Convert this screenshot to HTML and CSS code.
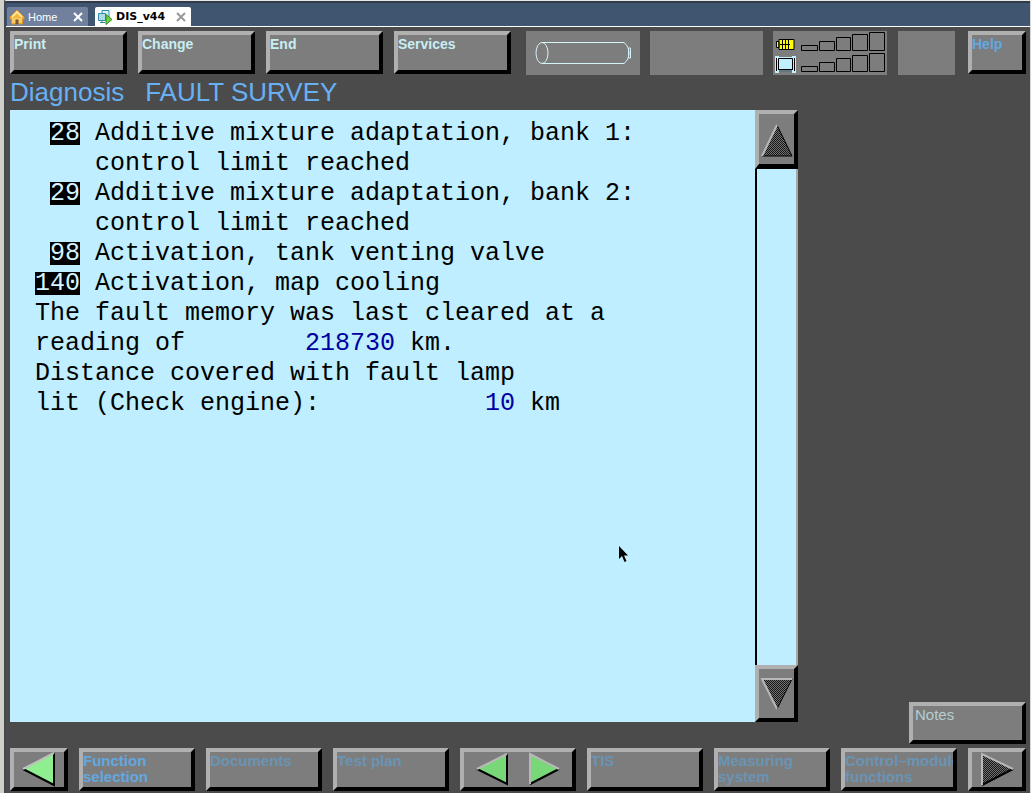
FILE: index.html
```html
<!DOCTYPE html>
<html lang="en">
<head>
<meta charset="utf-8">
<title>DIS_v44</title>
<link rel="stylesheet" href="styles.css">
</head>
<body>
<div class="window">
  <nav class="tabs" aria-label="Machines">
    <div class="tab">
      <svg class="tab-icon" width="16" height="16" viewBox="0 0 16 16"><path d="M8 1 1 8v2h1.500v5h4v-5h3v5h4v-5H15V8z" fill="#f5b63c" stroke="#d99524"/><path d="M3 8 8 3l5 5" fill="none" stroke="#fff0b0" stroke-width="1.500"/><path d="M3 9h10v5H3z" fill="#f8cc62"/><path d="M6.500 15v-4.500h3V15z" fill="#775735"/></svg>
      <a class="tab-link" href="#home">Home</a>
      <button class="tab-close" aria-label="Close Home"><svg width="10" height="10" viewBox="0 0 10 10"><path d="m1 1 8 8M9 1 1 9" stroke="currentColor" stroke-width="2"/></svg></button>
    </div>
    <div class="tab tab-active">
      <svg class="tab-icon" width="16" height="16" viewBox="0 0 16 16"><path d="M5 1.500h7v7H5z" fill="#d9f3f8" stroke="#318da8"/><path d="M1.500 4.500h7v7h-7z" fill="#a9dcea" stroke="#318da8"/><path d="M3 13.500h5M5 11.500v2" stroke="#318da8"/><path d="M9 5.500v10l6-5z" fill="#6fd23c" stroke="#328b22"/></svg>
      <a class="tab-link" href="#dis">DIS_v44</a>
      <button class="tab-close" aria-label="Close DIS_v44"><svg width="10" height="10" viewBox="0 0 10 10"><path d="m1 1 8 8M9 1 1 9" stroke="currentColor" stroke-width="2"/></svg></button>
    </div>
  </nav>

  <div class="app">
    <header class="toolbar">
      <div class="menu">
        <button class="key">Print</button>
        <button class="key">Change</button>
        <button class="key">End</button>
        <button class="key">Services</button>
      </div>
      <div class="status">
        <div class="panel"><svg class="cable" width="96" height="24" viewBox="0 0 96 24" fill="none" stroke="#d4f4fa"><ellipse cx="7" cy="12" rx="6" ry="10.500"/><path d="M7 1.500h82q5 4 5 10.500t-5 10.500H7"/><path d="M93.500 7h2v10h-2z"/></svg></div>
        <div class="panel"></div>
        <div class="panel">
          <svg class="signal" width="113" height="44" viewBox="0 0 113 44" fill="none">
            <path d="M5 8.500h15v10H5zM2.500 10.500H5v6H2.500z" fill="#ff0" stroke="#000"/>
            <path d="M8.500 9v9M11.500 9v9M14.500 9v9M6 13.500h10" stroke="#000"/>
            <path d="M1 25h4v17H1zM18 25h4v17h-4zM4 26h15v15H4z" fill="#c2efff"/>
            <path d="M2.500 27v13M20.500 27v13M4.500 27.500h14v11h-14zM5 40h13M4 38.500h15" stroke="#000"/>
            <path d="M27.500 14.500h16v5h-16zM45.500 10.500h15v9h-15zM62.500 6.500h14v13h-14zM78.500 3.500h15v16h-15zM95.500 1.500h15v18h-15zM27.500 35.500h16v5h-16zM45.500 31.500h15v9h-15zM62.500 27.500h14v13h-14zM78.500 24.500h15v16h-15zM95.500 22.500h15v18h-15z" stroke="#000"/>
          </svg>
        </div>
      </div>
      <div class="panel panel-small"></div>
      <button class="key key-small key-blue">Help</button>
    </header>

    <h1 class="title"><span>Diagnosis</span><span>FAULT SURVEY</span></h1>

    <div class="workspace">
      <main class="screen">
        <div class="report">
          <ul class="faults">
            <li class="fault"><span class="code-cell"><b class="code">28</b></span><span>Additive mixture adaptation, bank 1:<br>control limit reached</span></li>
            <li class="fault"><span class="code-cell"><b class="code">29</b></span><span>Additive mixture adaptation, bank 2:<br>control limit reached</span></li>
            <li class="fault"><span class="code-cell"><b class="code">98</b></span><span>Activation, tank venting valve</span></li>
            <li class="fault"><span class="code-cell"><b class="code">140</b></span><span>Activation, map cooling</span></li>
          </ul>
          <div>The fault memory was last cleared at a</div>
          <div class="reading"><span class="reading-label">reading of</span><span class="value">218730</span><span>km.</span></div>
          <div>Distance covered with fault lamp</div>
          <div class="reading"><span class="reading-label reading-wide">lit (Check engine):</span><span class="value">10</span><span>km</span></div>
        </div>
        <div class="scroller">
          <button class="key scroll-key scroll-up" aria-label="Scroll up"><svg width="34" height="36" viewBox="0 0 34 36"><defs><pattern id="dots" width="2" height="2" patternUnits="userSpaceOnUse"><path d="M0 0h2v2H0z" fill="#707070"/><path d="M0 0h1v1H0zM1 1h1v1H1z" fill="#181818"/></pattern></defs><path d="M17 3 2 34h30z" fill="url(#dots)"/><path d="m17 3 15 31H2" fill="none" stroke="#000"/><path d="M2 34 17 3" stroke="#b8b8b8" stroke-width="2"/></svg></button>
          <div class="track"></div>
          <button class="key scroll-key scroll-down" aria-label="Scroll down"><svg width="34" height="36" viewBox="0 0 34 36"><path d="M2 3h30L17 33z" fill="url(#dots)"/><path d="M32 3 17 33" stroke="#000"/><path d="M32 3H2l15 30" fill="none" stroke="#b8b8b8" stroke-width="2"/></svg></button>
        </div>
        <svg class="pointer" width="12" height="18" viewBox="0 0 12 18"><path d="M1 0v13l3-3 2.500 6 2-1L6 9.500h4z" fill="#000"/></svg>
      </main>
      <aside class="side"><button class="key notes" disabled>Notes</button></aside>
    </div>

    <footer class="keys">
      <button class="key key-small key-icon" aria-label="Back"><svg width="36" height="35" viewBox="0 0 36 35"><path d="M33 1v32L2 17z" fill="#8fee8f"/><path d="M33 1v32L2 17" fill="none" stroke="#000" stroke-width="2"/><path d="M2 17 33 1" stroke="#c0c0c0" stroke-width="2"/></svg></button>
      <button class="key key-blue">Function selection</button>
      <button class="key key-blue" disabled>Documents</button>
      <button class="key key-blue" disabled>Test plan</button>
      <button class="key key-icon" aria-label="Previous or next"><svg width="86" height="35" viewBox="0 0 86 35"><path d="M32 2v30L2 17z" fill="#78d878"/><path d="M32 2v30L2 17" fill="none" stroke="#000" stroke-width="2"/><path d="M2 17 32 2" stroke="#b8b8b8" stroke-width="2"/><path d="M55 2v30l29-15z" fill="#78d878"/><path d="m55 32 29-15" stroke="#000" stroke-width="2"/><path d="M55 32V2l29 15" fill="none" stroke="#b8b8b8" stroke-width="2"/></svg></button>
      <button class="key key-blue" disabled>TIS</button>
      <button class="key key-blue" disabled>Measuring<br>system</button>
      <button class="key key-blue" disabled>Control–module<br>functions</button>
      <button class="key key-small key-icon" aria-label="Forward"><svg width="36" height="35" viewBox="0 0 36 35"><path d="M3 2v31l31-16z" fill="url(#dots)"/><path d="m3 33 31-16" stroke="#000" stroke-width="2"/><path d="M3 33V2l31 15" fill="none" stroke="#b8b8b8" stroke-width="2"/></svg></button>
    </footer>
  </div>
</div>
</body>
</html>
```
FILE: styles.css
```css
* { box-sizing: border-box; }

body {
  margin: 0;
  background: #d0d0c8;
  font-family: "Liberation Sans", Arial, sans-serif;
}

.window {
  display: flex;
  flex-direction: column;
  min-height: 100vh;
  margin-left: 4px;
  border-top: 1px solid #e8e8e8;
  border-left: 2px solid #424750;
  border-right: 1px solid #d8d8d8;
}

.tabs {
  display: flex;
  gap: 7px;
  height: 26px;
  padding: 4px 1px 0;
  border-top: 2px solid #303a48;
  border-bottom: 1px solid #fff;
  background: #40556f;
}

.tab {
  display: flex;
  align-items: center;
  width: 81px;
  padding: 0 5px 0 2px;
  border-radius: 2px 2px 0 0;
  background: #71819d;
  color: #fff;
  font: 11px "Liberation Sans", Arial, sans-serif;
}

.tab-active {
  width: 96px;
  background: #fff;
  color: #000;
  font: bold 11px "DejaVu Sans", sans-serif;
}

.tab-icon { flex: none; margin-right: 3px; }
.tab-link { flex: 1; color: inherit; text-decoration: none; }

.tab-close {
  display: flex;
  padding: 0;
  border: 0;
  background: none;
  color: #fff;
}
.tab-active .tab-close { color: #999; }

.app {
  flex: 1;
  display: flex;
  flex-direction: column;
  padding: 4px 4px 2px;
  background: #4b4b4b;
}

.toolbar { display: flex; height: 44px; }
.menu { display: flex; flex: 501; gap: 11px; height: 43px; margin-right: 15px; }
.status { display: flex; flex: 361; gap: 10px; margin-right: 11px; }

.key {
  flex: 1 1 0;
  display: flex;
  flex-direction: column;
  align-items: flex-start;
  min-width: 0;
  height: 43px;
  padding: 1px 0 0;
  overflow: hidden;
  border: 4px solid;
  border-color: #b0b0b0 #000 #000 #b0b0b0;
  background: #7d7d7d;
  color: #c8eef4;
  font: bold 14px/16px "Liberation Sans", Arial, sans-serif;
  text-align: left;
}
.key-small { flex: 0 0 58px; }
.key-blue { color: #62a8e0; }
.key-blue:disabled { color: #6a94b4; white-space: nowrap; }
.key-icon { align-items: center; justify-content: center; padding: 0; }
.key svg { flex: none; }

.panel {
  display: flex;
  flex: 1;
  align-items: center;
  justify-content: center;
  background: #7d7d7d;
}
.panel-small { flex: 0 0 57px; margin-right: 13px; }

.title {
  display: flex;
  gap: 21px;
  height: 35px;
  margin: 0;
  color: #68b0f4;
  font-size: 26px;
  font-weight: normal;
  line-height: 35px;
}

.workspace { display: flex; flex: 1; }

.screen {
  position: relative;
  display: flex;
  flex: 788;
  margin-bottom: 22px;
  background: #beeeff;
}

.report {
  flex: 1;
  padding: 9px 0 0 25px;
  color: #000;
  font: 25px/30px "Liberation Mono", "Courier New", monospace;
}

.faults { margin: 0; padding: 0; list-style: none; }
.fault { display: flex; gap: 15px; }
.code-cell { width: 45px; text-align: right; }
.code {
  display: inline-block;
  background: #000;
  color: #d4f4ff;
  font-weight: normal;
  line-height: 23px;
}
.reading { display: flex; }
.reading-label { width: 270px; }
.reading-wide { width: 450px; }
.value { margin-right: 15px; color: #0000a0; }

.scroller { display: flex; flex-direction: column; width: 43px; }
.scroll-key { flex: none; align-items: center; justify-content: center; }
.scroll-up { height: 59px; border-bottom-width: 5px; }
.scroll-down { height: 57px; }
.track { flex: 1; border-left: 2px solid #000; border-right: 2px solid #a8a8a8; }

.pointer { position: absolute; left: 608px; top: 436px; }

.side { display: flex; flex: 228; align-items: flex-end; justify-content: flex-end; }
.notes { flex: 0 0 117px; height: 42px; padding-left: 2px; color: #b4ced2; font-size: 15px; font-weight: normal; }

.keys { display: flex; gap: 11px; margin-top: 4px; }
.keys .key { font-size: 15px; }
```
